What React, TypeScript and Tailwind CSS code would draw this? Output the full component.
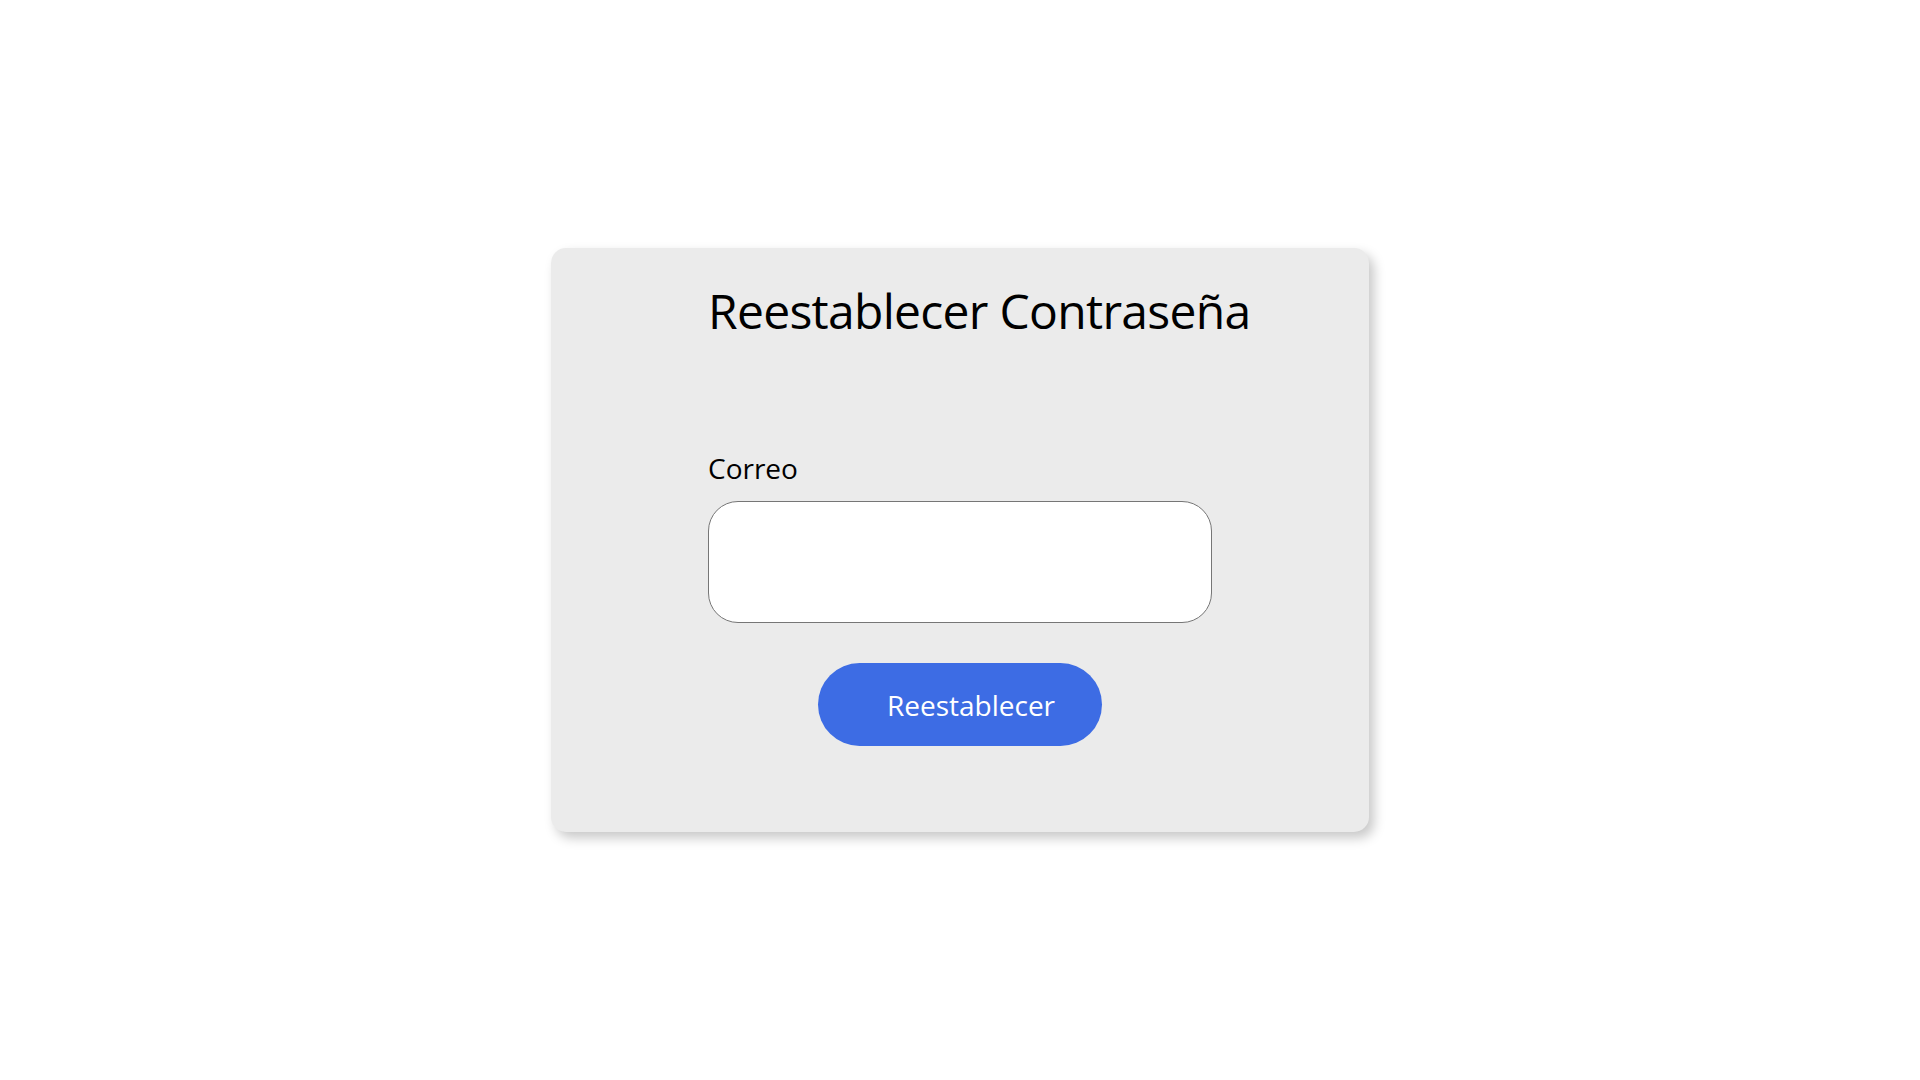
export default function App() {
  return (
    <div className="flex min-h-screen items-center justify-center bg-white font-['Segoe_UI','Open_Sans',sans-serif] text-black">
      <div className="flex h-[584px] w-[818px] flex-col items-center rounded-[15px] bg-[#ebebeb] pt-[30px] shadow-[5px_6px_12px_rgba(0,0,0,0.22)]">
        <form className="flex w-[504px] flex-col" onSubmit={(e) => e.preventDefault()}>
          <h1 className="whitespace-nowrap text-[48px] leading-[65px] font-normal tracking-[-0.7px]">Reestablecer Contraseña</h1>
          <label htmlFor="correo" className="mt-[108px] text-[28px] leading-[35px]">
            Correo
          </label>
          <input
            id="correo"
            type="email"
            className="mt-[15px] h-[122px] w-full rounded-[30px] border border-[#767676] bg-white px-6 text-[24px] outline-none"
          />
        </form>
        <button
          type="button"
          className="mt-[40px] flex h-[83px] w-[284px] items-center justify-center rounded-full bg-[#3d6ce4] pl-[22px] text-[28px] text-white"
        >
          Reestablecer
        </button>
      </div>
    </div>
  );
}
